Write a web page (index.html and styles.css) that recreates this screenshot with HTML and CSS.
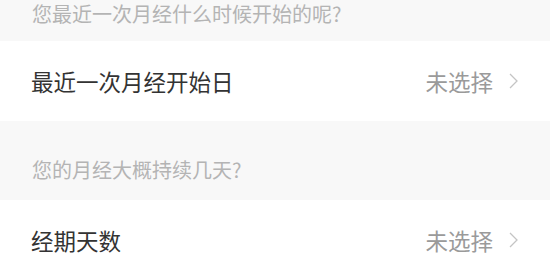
FILE: index.html
```html
<!DOCTYPE html>
<html lang="zh-CN">
<head>
<meta charset="utf-8">
<link rel="stylesheet" href="styles.css">
</head>
<body>
<div class="page">
  <div class="hint hint-first">您最近一次月经什么时候开始的呢?</div>
  <div class="row">
    <span class="label">最近一次月经开始日</span>
    <span class="value">未选择<svg class="chev" width="9" height="16" viewBox="0 0 9 16"><polyline points="1,1 8,8 1,15" fill="none" stroke="#c4c4c4" stroke-width="1.3"/></svg></span>
  </div>
  <div class="hint">您的月经大概持续几天?</div>
  <div class="row">
    <span class="label">经期天数</span>
    <span class="value">未选择<svg class="chev" width="9" height="16" viewBox="0 0 9 16"><polyline points="1,1 8,8 1,15" fill="none" stroke="#c4c4c4" stroke-width="1.3"/></svg></span>
  </div>
</div>
</body>
</html>
```
FILE: styles.css
```css
html, body {
  margin: 0;
  padding: 0;
  background: #f8f8f8;
}
body {
  font-family: "Noto Sans CJK SC", "Noto Sans", sans-serif;
  width: 550px;
  height: 275px;
  overflow: hidden;
}
.page {
  display: flex;
  flex-direction: column;
}
.hint {
  height: 79px;
  box-sizing: border-box;
  padding: 39px 32px 0;
  font-size: 20px;
  line-height: 20px;
  color: #b4b4b4;
  display: flex;
  align-items: flex-start;
}
.hint-first {
  height: 41px;
  padding-top: 4px;
}
.row {
  height: 80px;
  background: #ffffff;
  display: flex;
  align-items: center;
  justify-content: space-between;
  padding: 0 32px 0 31px;
}
.label {
  font-size: 22.5px;
  color: #333333;
}
.value {
  font-size: 22.5px;
  color: #9a9a9a;
  display: flex;
  align-items: center;
  gap: 16px;
}
.chev {
  display: block;
}
```
